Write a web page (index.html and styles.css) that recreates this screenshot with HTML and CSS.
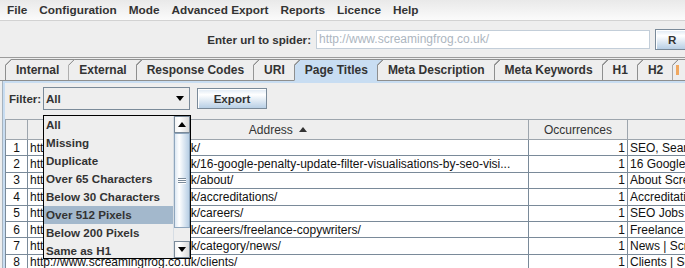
FILE: index.html
```html
<!DOCTYPE html>
<html lang="en">
<head>
  <meta charset="UTF-8" />
  <title>Screaming Frog SEO Spider</title>
  <link rel="stylesheet" href="styles.css">
</head>
<body>
  <div class="menubar">
    <span>File</span>
    <span>Configuration</span>
    <span>Mode</span>
    <span>Advanced Export</span>
    <span>Reports</span>
    <span>Licence</span>
    <span>Help</span>
  </div>

  <div class="urlbar">
    <label class="url-label">Enter url to spider:</label>
    <input class="url" type="text" placeholder="http://www.screamingfrog.co.uk/" />
    <button class="btn run">R</button>
  </div>

  <div class="tabs">
    <div class="tab">Internal</div>
    <div class="tab">External</div>
    <div class="tab">Response Codes</div>
    <div class="tab">URI</div>
    <div class="tab selected">Page Titles</div>
    <div class="tab">Meta Description</div>
    <div class="tab">Meta Keywords</div>
    <div class="tab">H1</div>
    <div class="tab">H2</div>
    <div class="tab last"><span class="tab-icon"></span>Images</div>
  </div>

  <div class="panel">
    <div class="panel-inner">
      <div class="filter">
        <span class="filter-label">Filter:</span>
        <div class="combo">
          <span class="combo-value">All</span>
          <span class="combo-arrow"></span>

          <div class="popup">
            <ul class="options">
              <li>All</li>
              <li>Missing</li>
              <li>Duplicate</li>
              <li>Over 65 Characters</li>
              <li>Below 30 Characters</li>
              <li class="active">Over 512 Pixels</li>
              <li>Below 200 Pixels</li>
              <li>Same as H1</li>
            </ul>
            <div class="scrollbar">
              <div class="sb-btn up"><span></span></div>
              <div class="sb-track">
                <div class="sb-thumb"><i></i><i></i><i></i></div>
              </div>
              <div class="sb-btn down"><span></span></div>
            </div>
          </div>
        </div>
        <button class="btn export">Export</button>
      </div>

      <table class="grid">
        <colgroup>
          <col class="c-num">
          <col class="c-addr">
          <col class="c-occ">
          <col class="c-title">
        </colgroup>
        <thead>
          <tr>
            <th></th>
            <th>Address <span class="sort-up"></span></th>
            <th>Occurrences</th>
            <th></th>
          </tr>
        </thead>
        <tbody>
          <tr><td class="num">1</td><td>http://www.screamingfrog.co.uk/</td><td class="occ">1</td><td>SEO, Search Engine Optimisation Agency</td></tr>
          <tr><td class="num">2</td><td>http://www.screamingfrog.co.uk/16-google-penalty-update-filter-visualisations-by-seo-visi...</td><td class="occ">1</td><td>16 Google Penalty Updates</td></tr>
          <tr><td class="num">3</td><td>http://www.screamingfrog.co.uk/about/</td><td class="occ">1</td><td>About Screaming Frog</td></tr>
          <tr><td class="num">4</td><td>http://www.screamingfrog.co.uk/accreditations/</td><td class="occ">1</td><td>Accreditations | Screaming Frog</td></tr>
          <tr><td class="num">5</td><td>http://www.screamingfrog.co.uk/careers/</td><td class="occ">1</td><td>SEO Jobs | Screaming Frog</td></tr>
          <tr><td class="num">6</td><td>http://www.screamingfrog.co.uk/careers/freelance-copywriters/</td><td class="occ">1</td><td>Freelance Copywriters</td></tr>
          <tr><td class="num">7</td><td>http://www.screamingfrog.co.uk/category/news/</td><td class="occ">1</td><td>News | Screaming Frog</td></tr>
          <tr><td class="num">8</td><td>http://www.screamingfrog.co.uk/clients/</td><td class="occ">1</td><td>Clients | Screaming Frog</td></tr>
        </tbody>
      </table>
    </div>
  </div>
</body>
</html>
```

FILE: styles.css
```css
* {
  box-sizing: border-box;
}
body {
  margin: 0;
  width: 685px;
  height: 268px;
  overflow: hidden;
  background: #eeeeee;
  font-family: "Liberation Sans", Arial, sans-serif;
  font-size: 12px;
  color: #333333;
}

/* menu bar */
.menubar {
  display: flex;
  height: 21px;
  padding-left: 1px;
  background: linear-gradient(#e9e9e9, #fbfbfb);
  border-bottom: 1px solid #d2d2d2;
  font-weight: bold;
  font-size: 11.8px;
}
.menubar span {
  padding: 0 6px;
  line-height: 20px;
  flex-shrink: 0;
}

/* url row */
.urlbar {
  display: flex;
  align-items: center;
  height: 37px;
  padding-left: 207px;
  border-bottom: 1px solid #9c9c9c;
}
.url-label {
  flex-shrink: 0;
  width: 104px;
  text-align: right;
  white-space: nowrap;
  font-weight: bold;
  font-size: 11.6px;
}
.url {
  flex-shrink: 0;
  width: 334px;
  height: 19px;
  margin-left: 5px;
  padding: 0 2px;
  border: 1px solid #c3ced9;
  background: #ffffff;
  font-family: "Liberation Sans", Arial, sans-serif;
  font-size: 12px;
  outline: none;
}
.url::placeholder {
  color: #adb6bf;
}

.btn {
  flex-shrink: 0;
  border: 1px solid #7a8a99;
  border-radius: 0;
  background: linear-gradient(#dde8f3, #ffffff 30%, #b8cfe5);
  font-family: "Liberation Sans", Arial, sans-serif;
  font-weight: bold;
  font-size: 11.6px;
  color: #333333;
  padding: 0;
  box-shadow: inset 1px 1px 0 #ffffff;
}
.run {
  width: 60px;
  height: 21px;
  margin-left: 5px;
  padding-left: 12px;
  text-align: left;
}
.export {
  width: 70px;
  height: 21px;
  margin-left: 7px;
}

/* tabs */
.tabs {
  display: flex;
  height: 22px;
  margin-top: 1px;
  padding-left: 5px;
  box-shadow: inset 0 -1px #8e8f8f;
}
.tab {
  flex-shrink: 0;
  height: 22px;
  margin-right: -6px;
  padding: 0 15px 0 10px;
  border: 1px solid #8e8f8f;
  border-right: 0;
  font-weight: bold;
  font-size: 12px;
  line-height: 20px;
  background: linear-gradient(135deg, #8e8f8f 0 5.2px, #eeeeee 5.2px) border-box;
  clip-path: polygon(6px 0, 100% 0, 100% 100%, 0 100%, 0 6px);
}
.tab.selected {
  border-bottom-color: #c8ddf2;
  background: linear-gradient(135deg, #8e8f8f 0 5.2px, #c8ddf2 5.2px) border-box;
}
.tab.last {
  padding-left: 3px;
}
.tab-icon {
  display: inline-block;
  width: 3px;
  height: 10px;
  margin-right: 14px;
  vertical-align: -1px;
  background: #f0a860;
}

/* content panel */
.panel {
  margin-left: 2px;
  border-left: 1px solid #a6b3bf;
}
.panel-inner {
  border-top: 2px solid #c8ddf2;
  border-left: 2px solid #c8ddf2;
}

.filter {
  display: flex;
  align-items: center;
  padding: 4px 4px 9px;
}
.filter-label {
  width: 34px;
  font-weight: bold;
  font-size: 11.6px;
}
.combo {
  position: relative;
  display: flex;
  align-items: center;
  width: 147px;
  height: 23px;
  border: 1px solid #7a8a99;
  background: #eeeeee;
  font-weight: bold;
  font-size: 11.6px;
}
.combo-value {
  flex: 1;
  padding-left: 2px;
}
.combo-arrow {
  width: 0;
  height: 0;
  margin-right: 5px;
  border-left: 4px solid transparent;
  border-right: 4px solid transparent;
  border-top: 5px solid #000000;
}

/* dropdown popup */
.popup {
  position: absolute;
  left: -1px;
  top: calc(100% + 6px);
  z-index: 5;
  display: flex;
  width: 148px;
  height: 144px;
  border: 1px solid #000000;
  background: #eeeeee;
}
.options {
  flex: 1;
  margin: 0;
  padding: 0;
  list-style: none;
}
.options li {
  height: 18px;
  line-height: 18px;
  padding-left: 2px;
  white-space: nowrap;
}
.options li.active {
  background: #a3b8cc;
}
.scrollbar {
  display: flex;
  flex-direction: column;
  width: 17px;
  border-left: 1px solid #d6dde4;
}
.sb-btn {
  display: flex;
  align-items: center;
  justify-content: center;
  height: 17px;
  border: 1px solid #7a8a99;
  background: linear-gradient(to right, #f4f4f4, #ffffff 30%, #dadada);
}
.sb-btn span {
  width: 0;
  height: 0;
  border-left: 4px solid transparent;
  border-right: 4px solid transparent;
}
.sb-btn.up span {
  border-bottom: 5px solid #000000;
}
.sb-btn.down span {
  border-top: 5px solid #000000;
}
.sb-track {
  flex: 1;
  background: #eeeeee;
}
.sb-thumb {
  display: flex;
  flex-direction: column;
  align-items: center;
  justify-content: center;
  gap: 1px;
  height: 95px;
  border: 1px solid #8fa6bd;
  background: linear-gradient(to right, #dde8f3, #ffffff 30%, #b8cfe5);
}
.sb-thumb i {
  display: block;
  width: 8px;
  height: 1px;
  background: #7a8a99;
  box-shadow: 0 1px #ffffff;
}

/* table */
.grid {
  table-layout: fixed;
  width: 822px;
  border-collapse: collapse;
  font-size: 12px;
  color: #111111;
}
.c-num { width: 22px; }
.c-addr { width: 501px; }
.c-occ { width: 99px; }
.c-title { width: 200px; }
.grid th {
  height: 20px;
  padding: 0;
  border: 1px solid #9da5ad;
  background: #eeeeee;
  font-weight: normal;
  color: #333333;
  text-align: center;
}
.grid td {
  height: 16.4px;
  padding: 0 0 0 2px;
  border: 1px solid #7a8a99;
  background: #ffffff;
  line-height: 14px;
  white-space: nowrap;
  overflow: hidden;
}
.grid td.num {
  padding: 0;
  text-align: center;
}
.grid td.occ {
  padding: 0 2px 0 0;
  text-align: right;
}
.sort-up {
  display: inline-block;
  width: 0;
  height: 0;
  margin-left: 3px;
  vertical-align: 2px;
  border-left: 4px solid transparent;
  border-right: 4px solid transparent;
  border-bottom: 5px solid #333333;
}
```
